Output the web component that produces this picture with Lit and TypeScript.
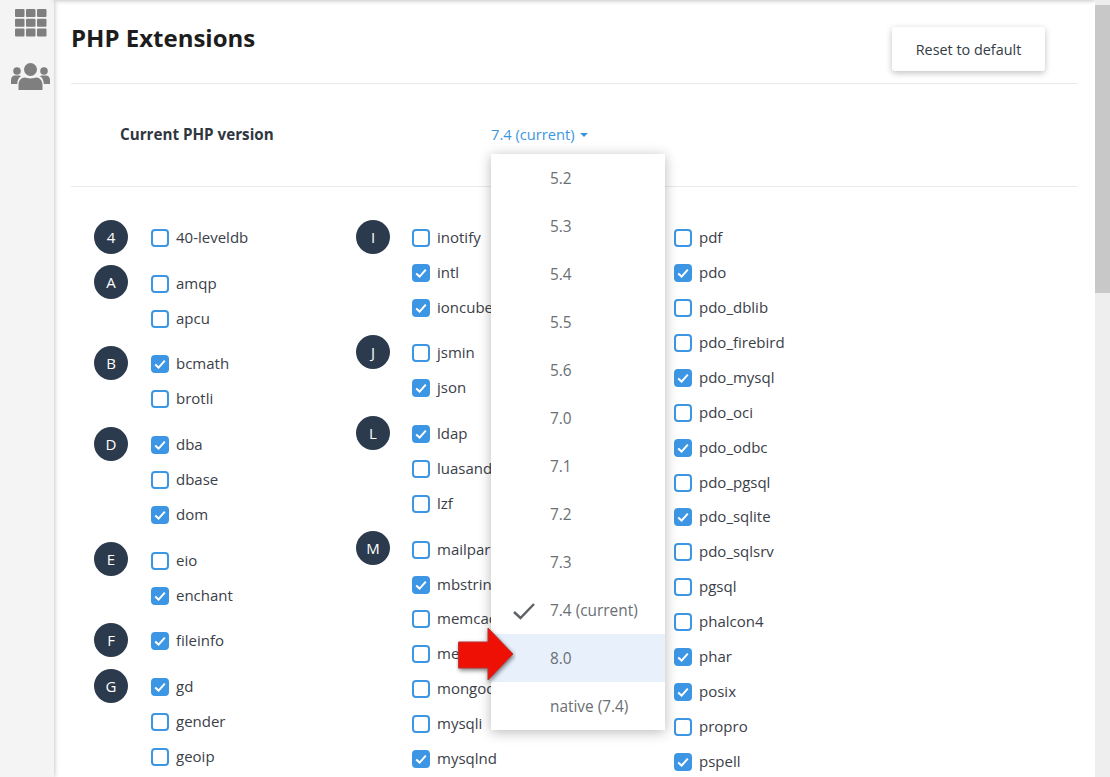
import { LitElement, html, css, svg } from "lit";
import { customElement } from "lit/decorators.js";

type Item = [string, boolean];
type Group = { letter: string; items: Item[] };

const col1: Group[] = [
  { letter: "4", items: [["40-leveldb", false]] },
  { letter: "A", items: [["amqp", false], ["apcu", false]] },
  { letter: "B", items: [["bcmath", true], ["brotli", false]] },
  { letter: "D", items: [["dba", true], ["dbase", false], ["dom", true]] },
  { letter: "E", items: [["eio", false], ["enchant", true]] },
  { letter: "F", items: [["fileinfo", true]] },
  { letter: "G", items: [["gd", true], ["gender", false], ["geoip", false]] },
];
const col2: Group[] = [
  { letter: "I", items: [["inotify", false], ["intl", true], ["ioncube_loader", true]] },
  { letter: "J", items: [["jsmin", false], ["json", true]] },
  { letter: "L", items: [["ldap", true], ["luasandbox", false], ["lzf", false]] },
  { letter: "M", items: [["mailparse", false], ["mbstring", true], ["memcache", false], ["memcached", false], ["mongodb", false], ["mysqli", false], ["mysqlnd", true]] },
];
const col3: Group[] = [
  { letter: "", items: [
    ["pdf", false], ["pdo", true], ["pdo_dblib", false], ["pdo_firebird", false], ["pdo_mysql", true],
    ["pdo_oci", false], ["pdo_odbc", true], ["pdo_pgsql", false], ["pdo_sqlite", true], ["pdo_sqlsrv", false],
    ["pgsql", false], ["phalcon4", false], ["phar", true], ["posix", true], ["propro", false], ["pspell", true],
  ] },
];
const versions = ["5.2", "5.3", "5.4", "5.5", "5.6", "7.0", "7.1", "7.2", "7.3", "7.4 (current)", "8.0", "native (7.4)"];

@customElement("app-root")
export class AppRoot extends LitElement {
  static styles = css`
    :host { display: block; height: 777px; overflow: hidden; position: relative; font-family: "Open Sans", sans-serif; background: #fff; color: #333; }
    .page { display: flex; height: 777px; }
    .side { width: 54px; flex: none; background: #f4f4f4; box-shadow: 0 0 5px rgba(0,0,0,.3); display: flex; flex-direction: column; align-items: center; padding: 9px 0 0 7px; gap: 26px; box-sizing: border-box; position: relative; }
    .side svg { display: block; }
    .main { flex: 1; min-width: 0; padding: 0 18px 0 17px; position: relative; }
    .top-shadow { position: absolute; left: 0; right: 0; top: -4px; height: 4px; box-shadow: 0 0 5px rgba(0,0,0,.35); }
    .head { height: 84px; box-sizing: border-box; border-bottom: 1px solid #eaeaea; display: flex; justify-content: space-between; align-items: flex-start; }
    h1 { margin: 21px 0 0 0; font-size: 24px; line-height: 33px; font-weight: 700; color: #1d1d20; }
    .reset { margin: 27px 32px 0 0; width: 153px; height: 44px; border-radius: 3px; background: #fff; box-shadow: 0 2px 6px rgba(0,0,0,.25); display: flex; align-items: center; justify-content: center; font-size: 14.4px; color: #333b44; }
    .ver { height: 103px; box-sizing: border-box; border-bottom: 1px solid #eaeaea; display: flex; padding: 39px 0 0 49px; line-height: 22px; }
    .ver b { width: 371px; font-size: 15.2px; font-weight: 700; color: #2f3640; }
    .cur { color: #3b96e0; display: flex; align-items: center; gap: 5px; height: 22px; font-size: 14.7px; }
    .caret { width: 0; height: 0; border: 4px solid transparent; border-top-color: #3b96e0; border-bottom: 0; margin-top: 1px; }
    .cols { display: flex; padding: 33px 0 0 23px; }
    .col { flex: none; }
    .c1 { width: 262px; } .c2 { width: 261px; }
    .c2 .items { margin-left: 22px; }
    .group { display: flex; margin-bottom: 11px; }
    .letter { width: 34px; height: 34px; border-radius: 50%; background: #2b3a4c; color: #fff; font-size: 15px; display: flex; align-items: center; justify-content: center; flex: none; margin-top: -0.5px; }
    .items { margin-left: 23px; display: flex; flex-direction: column; }
    .items.nolet { margin-left: 57px; }
    .row { height: 34.85px; display: flex; align-items: center; gap: 7px; font-size: 15px; color: #3a4048; white-space: nowrap; }
    .nolet .row { height: 34.95px; }
    .row span:last-child { position: relative; top: -0.5px; }
    .box { width: 18px; height: 18px; box-sizing: border-box; border: 2px solid #3d96e4; border-radius: 4px; background: #fff; flex: none; display: flex; align-items: center; justify-content: center; position: relative; top: 0.5px; }
    .box.on { background: #3d96e4; }
    .menu { position: absolute; left: 491px; top: 154px; width: 174px; height: 576px; background: #fff; box-shadow: 0 2px 12px rgba(0,0,0,.28); display: flex; flex-direction: column; z-index: 5; }
    .opt { height: 48px; box-sizing: border-box; padding: 1px 0 0 59px; flex: none; display: flex; align-items: center; font-size: 15.4px; color: #6a6f74; position: relative; }
    .opt.hl { background: #e8f1fb; }
    .check { position: absolute; left: 21px; top: 16px; }
    .arrow { position: absolute; left: 456px; top: 626px; z-index: 6; }
    .scroll { width: 15px; flex: none; background: #eee; position: relative; }
    .thumb { position: absolute; left: 0; right: 0; top: 5px; height: 288px; background: #c8c8c8; }
  `;

  renderGroups(gs: Group[]) {
    return gs.map((g) => html`
      <div class="group">
        ${g.letter ? html`<div class="letter">${g.letter}</div>` : ""}
        <div class="items ${g.letter ? "" : "nolet"}">
          ${g.items.map(([n, on]) => html`
            <div class="row">
              <span class="box ${on ? "on" : ""}">${on ? html`<svg width="14" height="14" viewBox="0 0 14 14"><path d="M2.2 7.400 5.600 10.600 11.800 3.600" fill="none" stroke="#fff" stroke-width="2"/></svg>` : ""}</span>
              <span>${n}</span>
            </div>`)}
        </div>
      </div>`);
  }

  render() {
    const grid = [0, 1, 2].flatMap((r) => [0, 1, 2].map((c) =>
      svg`<rect x="${c * 11}" y="${r * 9.7}" width="9.500" height="8" rx="1" fill="#7f7f7f"/>`));
    return html`
      <div class="page">
        <aside class="side">
          <svg width="32" height="28" viewBox="0 0 32 28">${grid}</svg>
          <svg width="39" height="27" viewBox="0 0 39 27" fill="#7f7f7f">
            <circle cx="19.500" cy="6.500" r="6.500"/>
            <path d="M7.500 27v-5c0-4.600 3-7.500 6-7.500 1.500 0 3 1 6 1s4.500-1 6-1c3 0 6 2.900 6 7.500v5c0 0-.5 0-1 0H8.500c-.5 0-1 0-1 0z"/>
            <circle cx="6" cy="8" r="3.800"/><circle cx="33" cy="8" r="3.800"/>
            <path d="M0 21v-4c0-2.500 1.600-4.500 4-4.500h4c.8 0 1.500.2 2.200.6-2.300 1.500-3.800 4-4 7.900z"/>
            <path d="M39 21v-4c0-2.500-1.600-4.500-4-4.500h-4c-.8 0-1.500.2-2.200.6 2.300 1.500 3.800 4 4 7.900z"/>
          </svg>
        </aside>
        <main class="main">
          <div class="top-shadow"></div>
          <div class="head"><h1>PHP Extensions</h1><div class="reset">Reset to default</div></div>
          <div class="ver"><b>Current PHP version</b><span class="cur">7.4 (current)<i class="caret"></i></span></div>
          <div class="cols">
            <div class="col c1">${this.renderGroups(col1)}</div>
            <div class="col c2">${this.renderGroups(col2)}</div>
            <div class="col">${this.renderGroups(col3)}</div>
          </div>
        </main>
        <div class="scroll"><div class="thumb"></div></div>
      </div>
      <div class="menu">
        ${versions.map((v) => html`
          <div class="opt ${v === "8.0" ? "hl" : ""}">
            ${v.includes("current") ? html`<svg class="check" width="24" height="18" viewBox="0 0 24 18"><path d="M2 10 8.500 16 22 2" fill="none" stroke="#5f6368" stroke-width="2.500"/></svg>` : ""}
            ${v}
          </div>`)}
      </div>
      <svg class="arrow" width="60" height="58" viewBox="0 0 60 58">
        <path d="M2.500 16H32V2L57 28 32 54V42H2.500z" fill="#ee0f05" stroke="#b33" stroke-width="1" style="filter:drop-shadow(1px 2px 2px rgba(0,0,0,.5))"/>
      </svg>
    `;
  }
}
